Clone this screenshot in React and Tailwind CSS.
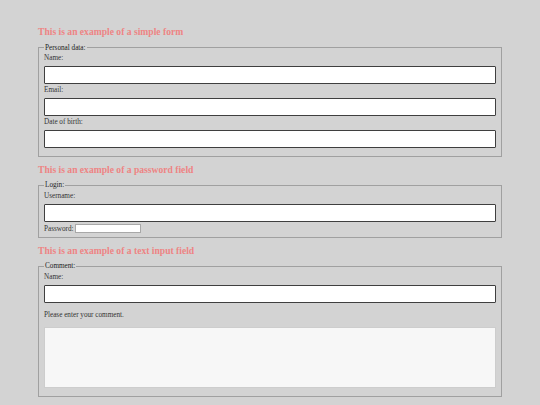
export default function App() {
  const heading = "font-bold text-[9.6px] leading-[11px] text-[#ee8484]";
  const fieldset = "border border-[#a0a0a0] px-[5px] m-0";
  const legend = "px-[1px] text-[7.2px] leading-[8px] text-[#222]";
  const label = "block text-[7.2px] leading-[8px] text-[#333]";
  const textInput =
    "block w-full h-[18px] mt-[4px] bg-white border-[1.5px] border-[#3f3f3f] rounded-[1px] outline-none";

  return (
    <div
      className="min-h-screen bg-[#d3d3d3] px-[38px] pt-[19px] pb-[10px]"
      style={{ fontFamily: '"Liberation Serif", "Times New Roman", serif' }}
    >
      {/* Simple form */}
      <h3 className={`${heading} mt-[7px] mb-[6.5px]`}>This is an example of a simple form</h3>
      <fieldset className={`${fieldset} pt-[2.5px] pb-[8px]`}>
        <legend className={legend}>Personal data:</legend>
        <label className={label}>Name:</label>
        <input type="text" className={textInput} />
        <label className={`${label} mt-[2px]`}>Email:</label>
        <input type="text" className={textInput} />
        <label className={`${label} mt-[2px]`}>Date of birth:</label>
        <input type="text" className={textInput} />
      </fieldset>

      {/* Password */}
      <h3 className={`${heading} mt-[6.5px] mb-[6.5px]`}>This is an example of a password field</h3>
      <fieldset className={`${fieldset} pt-[2.5px] pb-[3.5px]`}>
        <legend className={legend}>Login:</legend>
        <label className={label}>Username:</label>
        <input type="text" className={textInput} />
        <div className="flex items-center mt-[2px] h-[10px]">
          <label className="text-[7.2px] leading-[8px] text-[#333]">Password:</label>
          <input
            type="password"
            className="ml-[1px] w-[66px] h-[9px] bg-white border border-[#a8a8a8] outline-none"
          />
        </div>
      </fieldset>

      {/* Text input */}
      <h3 className={`${heading} mt-[7px] mb-[6px]`}>This is an example of a text input field</h3>
      <fieldset className={`${fieldset} pt-[2.5px] pb-[7.5px]`}>
        <legend className={legend}>Comment:</legend>
        <label className={label}>Name:</label>
        <input type="text" className={textInput} />
        <label className={`${label} mt-[8.5px]`}>Please enter your comment.</label>
        <textarea className="block w-full h-[61px] mt-[8px] bg-[#f7f7f7] border border-[#cdcdcd] resize-none outline-none" />
      </fieldset>
    </div>
  );
}
